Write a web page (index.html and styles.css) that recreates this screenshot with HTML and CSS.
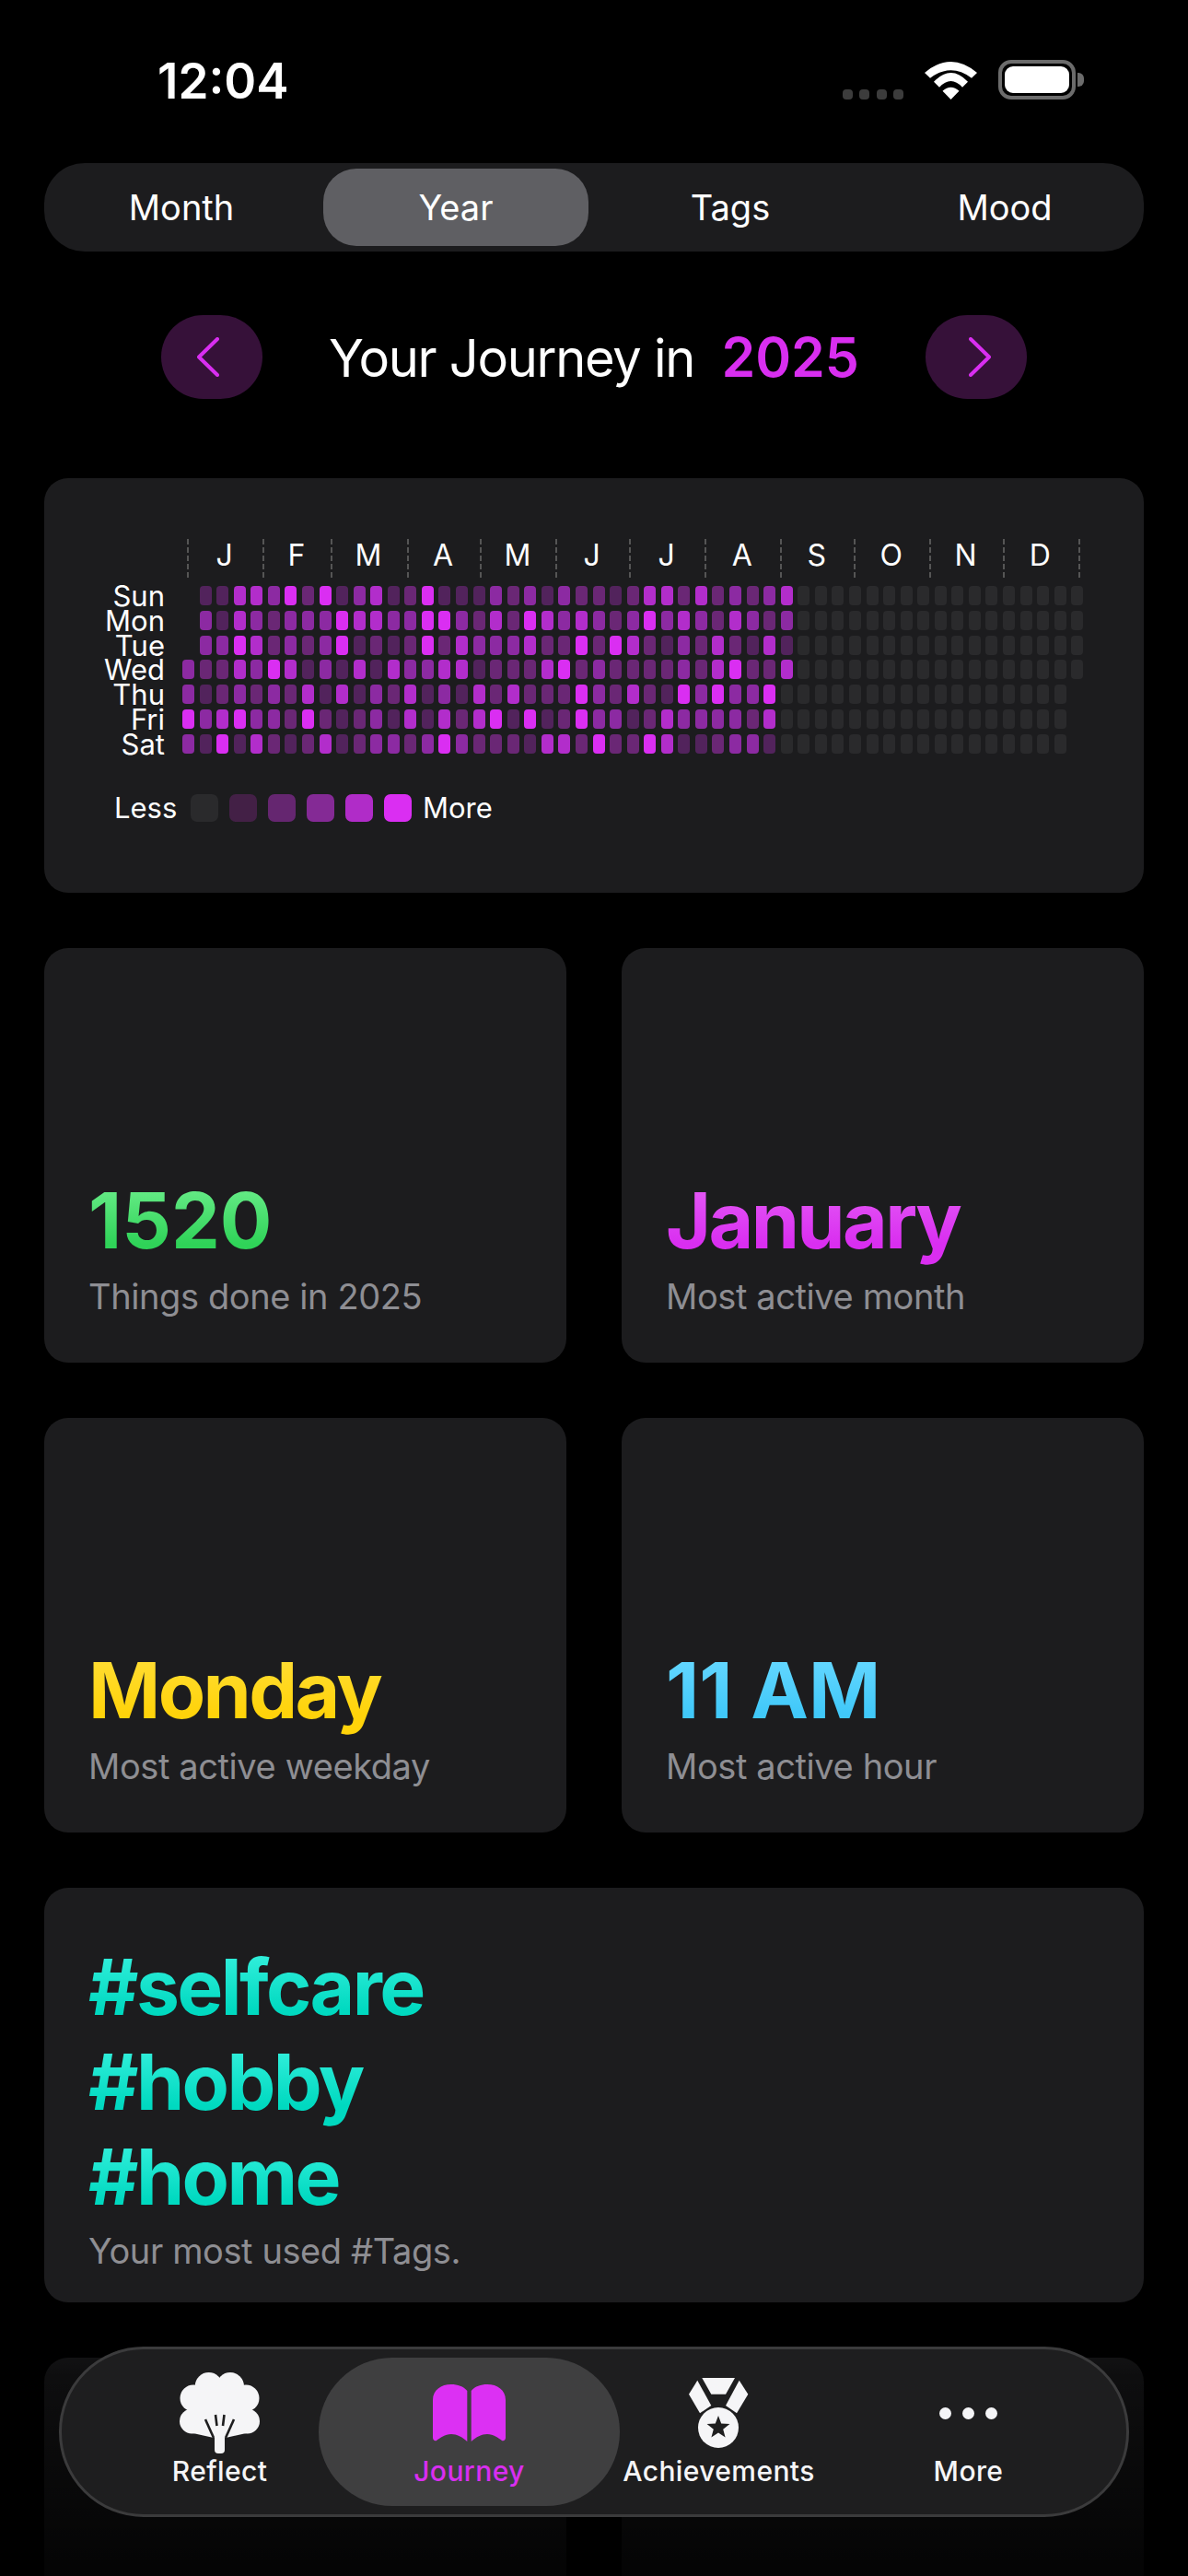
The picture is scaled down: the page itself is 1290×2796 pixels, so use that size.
FILE: index.html
```html
<!DOCTYPE html>
<html lang="en">
<head>
    <meta charset="UTF-8">
    <meta name="viewport" content="width=device-width, initial-scale=1.0">
    <title>Journey</title>
    <link rel="stylesheet" href="styles.css">
    <script src="script.js"></script>
</head>
<body>
    <!-- status bar -->
    <div class="status">
        <span class="time">12:04</span>
        <div class="status-icons">
            <div class="signal"><i></i><i></i><i></i><i></i></div>
            <svg class="wifi" viewBox="0 0 57 41">
                <path d="M0 12Q28.5-12 57 12L51 17.7Q28.5 .9 6 17.7Z"/>
                <path d="M10 21.7Q28.5 2.3 47 21.7L41 27.7Q28.5 14.3 16 27.7Z"/>
                <path d="M19.5 31.7Q28.5 23.7 37.5 31.7L28.5 41Z"/>
            </svg>
            <div class="battery"><div class="battery-level"></div></div>
            <div class="battery-nub"></div>
        </div>
    </div>

    <div class="page">
        <!-- top tabs -->
        <div class="segments">
            <div class="segment">Month</div>
            <div class="segment active">Year</div>
            <div class="segment">Tags</div>
            <div class="segment">Mood</div>
        </div>

        <!-- year switch -->
        <div class="year-nav">
            <div class="arrow prev">
                <svg viewBox="0 0 24 43"><path d="M22 2L2 21.5L22 41"/></svg>
            </div>
            <h1 class="year-title">Your Journey in <b>2025</b></h1>
            <div class="arrow next">
                <svg viewBox="0 0 24 43"><path d="M2 2L22 21.5L2 41"/></svg>
            </div>
        </div>

        <!-- heatmap -->
        <div class="card heat-card">
            <div class="months">
                <span>J</span><span>F</span><span>M</span><span>A</span><span>M</span><span>J</span>
                <span>J</span><span>A</span><span>S</span><span>O</span><span>N</span><span>D</span>
            </div>
            <div class="heat-body">
                <div class="days">
                    <span>Sun</span><span>Mon</span><span>Tue</span><span>Wed</span><span>Thu</span><span>Fri</span><span>Sat</span>
                </div>
                <div class="heat-grid" id="heatGrid"></div>
            </div>
            <div class="legend">
                <span class="legend-less">Less</span>
                <i class="l0"></i><i class="l1"></i><i class="l2"></i><i class="l3"></i><i class="l4"></i><i class="l5"></i>
                <span>More</span>
            </div>
        </div>

        <!-- stats -->
        <div class="stats">
            <div class="card stat">
                <div class="value number green">1520</div>
                <div class="caption">Things done in 2025</div>
            </div>
            <div class="card stat">
                <div class="value magenta">January</div>
                <div class="caption">Most active month</div>
            </div>
            <div class="card stat">
                <div class="value yellow">Monday</div>
                <div class="caption">Most active weekday</div>
            </div>
            <div class="card stat">
                <div class="value number blue">11 AM</div>
                <div class="caption">Most active hour</div>
            </div>
        </div>

        <div class="card stat tags">
            <div class="value teal">#selfcare</div>
            <div class="value teal">#hobby</div>
            <div class="value teal">#home</div>
            <div class="caption">Your most used #Tags.</div>
        </div>

        <!-- cards cut off by the window -->
        <div class="stats">
            <div class="card cut"></div>
            <div class="card cut"></div>
        </div>
    </div>

    <div class="fade"></div>

    <!-- bottom tab bar -->
    <div class="tabbar">
        <div class="tab">
            <div class="tab-icon">
                <svg class="tree" viewBox="0 0 87 88">
                    <g fill="#f5f5f7">
                        <circle cx="31.7" cy="15" r="15"/>
                        <circle cx="55" cy="15" r="15"/>
                        <circle cx="15" cy="28" r="14.5"/>
                        <circle cx="72" cy="28" r="14.5"/>
                        <circle cx="13.5" cy="53" r="13.5"/>
                        <circle cx="73.5" cy="53" r="13.5"/>
                        <path d="M10 15H77V65L50 71H37L10 65Z"/>
                        <rect x="38" y="62" width="11" height="26" rx="4"/>
                    </g>
                    <g fill="none" stroke="#1e1e1f" stroke-width="2.6">
                        <path d="M28 51L37 71"/>
                        <path d="M39 46L40.5 58"/>
                        <path d="M48.5 46L47 58"/>
                        <path d="M59 51L50 71"/>
                    </g>
                </svg>
            </div>
            <span>Reflect</span>
        </div>
        <div class="tab active">
            <div class="tab-icon">
                <svg class="book" viewBox="0 0 79 62">
                    <path d="M0 17C0 6 9 0 20 0C27 0 33 2 37.3 7V62C32 57 26 54 20 54C13 54 8 58 4 61C2 62 0 60 0 58Z"/>
                    <path d="M79 17C79 6 70 0 59 0C52 0 46 2 41.7 7V62C47 57 53 54 59 54C66 54 71 58 75 61C77 62 79 60 79 58Z"/>
                </svg>
            </div>
            <span>Journey</span>
        </div>
        <div class="tab">
            <div class="tab-icon">
                <svg class="medal" viewBox="0 0 65 76">
                    <g fill="#f5f5f7">
                        <path d="M14.3 0H50L40 17.7H24.3Z"/>
                        <path d="M9.3 2.7L0 17.7L12 38.3L24.3 30Z"/>
                        <path d="M54.7 2.7L64.3 17.7L52 38.3L40 30Z"/>
                        <circle cx="32" cy="54" r="22"/>
                    </g>
                    <path fill="#1e1e1f" d="M32 41L35.2 49.5L44.4 50L37.2 55.7L39.6 64.5L32 59.5L24.4 64.5L26.8 55.7L19.6 50L28.8 49.5Z"/>
                </svg>
            </div>
            <span>Achievements</span>
        </div>
        <div class="tab">
            <div class="tab-icon">
                <div class="dots"><i></i><i></i><i></i></div>
            </div>
            <span>More</span>
        </div>
    </div>
</body>
</html>
```

FILE: styles.css
```css
*{
    margin: 0;
    padding: 0;
    box-sizing: border-box;
}
html,body{
    background-color: #000;
}
body{
    position: relative;
    width: 1290px;
    height: 2796px;
    overflow: hidden;
    font-family: Inter, "Noto Sans", "Liberation Sans", sans-serif;
    color: #fff;
}

/* status bar */
.status{
    height: 177px;
    padding: 65px 113px 0 171px;
    display: flex;
    justify-content: space-between;
    align-items: flex-start;
}
.time{
    font-size: 53px;
    font-weight: 600;
    line-height: 46px;
}
.status-icons{
    display: flex;
    align-items: flex-end;
}
.signal{
    display: flex;
    gap: 7.3px;
    margin-right: 23px;
}
.signal i{
    width: 11px;
    height: 11px;
    border-radius: 4px;
    background-color: #3c3c3c;
}
.wifi{
    width: 57px;
    height: 41px;
    fill: #fff;
    margin-right: 23px;
}
.battery{
    width: 84px;
    height: 43px;
    padding: 3px;
    border: 4px solid #6c6c6c;
    border-radius: 14px;
}
.battery-level{
    height: 100%;
    border-radius: 9px;
    background-color: #fff;
}
.battery-nub{
    width: 7px;
    height: 15px;
    margin: 0 0 14px 2px;
    border-radius: 0 6px 6px 0;
    background-color: #6c6c6c;
}

.page{
    padding: 0 48px;
}

/* top tabs */
.segments{
    display: grid;
    grid-template-columns: repeat(4,1fr);
    height: 96px;
    padding-right: 2px;
    border-radius: 44px;
    background-color: #1c1c1e;
}
.segment{
    margin: 6px 5px;
    border-radius: 36px;
    font-size: 38px;
    line-height: 84px;
    text-align: center;
}
.segment.active{
    background-color: #5f5f63;
}

/* year switch */
.year-nav{
    display: flex;
    justify-content: space-between;
    align-items: center;
    height: 91px;
    margin-top: 69px;
    padding: 0 127px;
}
.arrow{
    display: flex;
    justify-content: center;
    align-items: center;
    width: 110px;
    height: 91px;
    border-radius: 46px;
    background-color: #361139;
}
.arrow.prev{
    padding-right: 8px;
}
.arrow.next{
    padding-left: 8px;
}
.arrow svg{
    width: 24px;
    height: 43px;
    fill: none;
    stroke: #d92ef0;
    stroke-width: 4;
    stroke-linecap: round;
    stroke-linejoin: round;
}
.year-title{
    font-size: 56px;
    font-weight: 400;
    letter-spacing: -1.3px;
}
.year-title b{
    margin-left: 15px;
    font-size: 59px;
    font-weight: 600;
    letter-spacing: 0;
    color: #d92ef0;
}

/* cards */
.card{
    border-radius: 26px;
    background-color: #1c1c1e;
}
.heat-card{
    height: 450px;
    margin-top: 86px;
    padding-top: 66px;
}
.months{
    display: grid;
    grid-template-columns: 31fr 28fr 31fr 30fr 31fr 30fr 31fr 31fr 30fr 31fr 30fr 31fr;
    width: 970px;
    height: 42px;
    margin-left: 155px;
    border-right: 2px dashed #555;
}
.months span{
    padding-right: 3px;
    border-left: 2px dashed #555;
    font-size: 32px;
    line-height: 36px;
    text-align: center;
}
.heat-body{
    display: flex;
    align-items: flex-start;
    margin-top: 9px;
}
.days{
    width: 131px;
    height: 182px;
    margin: -2px 19px 0 0;
    text-align: right;
    font-size: 31px;
    line-height: 26.8px;
}
.days span{
    display: block;
    height: 26.8px;
}
.heat-grid{
    display: grid;
    grid-template-rows: repeat(7,21px);
    grid-template-columns: repeat(53,13px);
    grid-auto-flow: column;
    column-gap: 5.57px;
    row-gap: 5.8px;
}
.heat-grid i{
    border-radius: 4px;
}
.heat-grid i.none{
    visibility: hidden;
}
.l0{ background-color: #2a2a2c; }
.l1{ background-color: #52235c; }
.l2{ background-color: #6a2775; }
.l3{ background-color: #8c2aa2; }
.l4{ background-color: #b22dcb; }
.l5{ background-color: #da2ef2; }
.legend{
    display: flex;
    align-items: center;
    height: 30px;
    margin-top: 44px;
    padding-left: 76px;
    font-size: 31px;
}
.legend i{
    width: 30px;
    height: 30px;
    margin-right: 12px;
    border-radius: 7px;
}
.legend-less{
    width: 83px;
}
.legend .l1{ background-color: #432046; }
.legend .l2{ background-color: #652670; }
.legend .l3{ background-color: #842a95; }
.legend .l4{ background-color: #b02cc8; }

/* stats */
.stats{
    display: grid;
    grid-template-columns: 567px 567px;
    column-gap: 60px;
    margin-top: 60px;
}
.stats .card + .card + .card{
    margin-top: 60px;
}
.stat{
    display: flex;
    flex-direction: column;
    justify-content: flex-end;
    height: 450px;
    padding: 0 48px 49px;
}
.cut{
    height: 237px;
    border-radius: 26px 26px 0 0;
}
.value{
    font-size: 84px;
    font-weight: 700;
    line-height: 103px;
    letter-spacing: -2.6px;
    background-clip: text;
    -webkit-background-clip: text;
    color: transparent;
}
.value.number{
    letter-spacing: 0;
}
.green{ background-image: linear-gradient(#62e983 20%,#2fd358 75%); }
.magenta{ background-image: linear-gradient(#e355f5 20%,#d92ef0 75%); }
.yellow{ background-image: linear-gradient(#ffdc30 20%,#ffd30a 75%); }
.blue{ background-image: linear-gradient(#62d6ff 20%,#40c8f9 75%); }
.teal{ background-image: linear-gradient(#2eedd9 20%,#00d9c0 75%); }
.caption{
    margin-top: 8px;
    font-size: 38px;
    line-height: 46px;
    letter-spacing: -.4px;
    color: #8e8e93;
}
.tags{
    margin-top: 60px;
    padding-bottom: 33px;
}
.tags .caption{
    margin-top: 6px;
}

/* over the content */
.fade{
    position: absolute;
    left: 0;
    right: 0;
    bottom: 0;
    height: 290px;
    background: linear-gradient(rgba(0,0,0,0),rgba(0,0,0,.5) 25%,rgba(0,0,0,.85));
}
.tabbar{
    position: absolute;
    left: 64px;
    bottom: 64px;
    display: grid;
    grid-template-columns: repeat(4,271px);
    width: 1162px;
    height: 185px;
    padding: 9px 36px;
    border: 3px solid #3b3b3c;
    border-radius: 92px;
    background-color: #1e1e1f;
}
.tab{
    display: flex;
    flex-direction: column;
    align-items: center;
    padding-top: 15px;
    font-size: 30px;
    font-weight: 450;
    letter-spacing: .4px;
    color: #f5f5f7;
}
.tab.active{
    width: 327px;
    margin: 0 -28px;
    border-radius: 80px;
    background-color: #3f3f40;
    color: #d92ef0;
}
.tab-icon{
    display: flex;
    justify-content: center;
    align-items: center;
    height: 90px;
}
.tab span{
    line-height: 36px;
}
.tree{
    width: 87px;
    height: 88px;
}
.book{
    width: 79px;
    height: 62px;
    fill: #dc30f3;
}
.medal{
    width: 65px;
    height: 76px;
}
.dots{
    display: flex;
    gap: 12px;
}
.dots i{
    width: 13px;
    height: 13px;
    border-radius: 50%;
    background-color: #f5f5f7;
}
```

FILE: script.js
```js
window.onload=function(){
  //每行一天 每个数字是一周的颜色等级 后面没写的周都是0
  var data=[
    " 11443525134125111323132212442423234",
    " 31432333544335532425434323534324323",
    " 33542323512125243334225254213242141",
    "322435413141433441222452322223245224",
    "312323241413241314242225324215353350",
    "534533252123141424515125331243333240",
    "315142124123323532221442522541123310"
  ];
  var grid=document.getElementById("heatGrid");
  for(var col=0;col<53;col++){
    for(var row=0;row<7;row++){
      var cell=document.createElement("i");
      //第一周前三天和最后一周后三天不存在
      if((col==0&&row<3)||(col==52&&row>3)){
        cell.className="none";
      }else{
        cell.className="l"+(data[row].charAt(col)||"0");
      }
      grid.appendChild(cell);
    }
  }
};
```
